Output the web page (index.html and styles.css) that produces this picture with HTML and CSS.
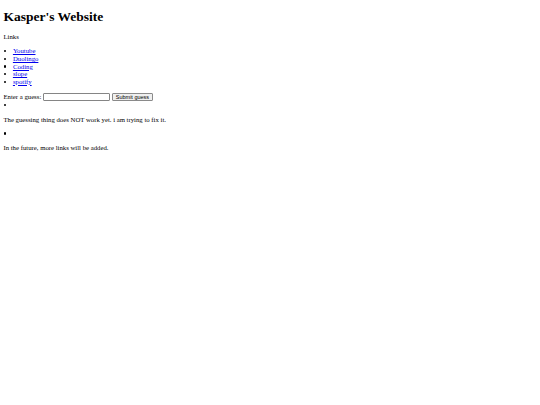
FILE: index.html
```html
<!DOCTYPE html>
<html lang="en">
<head>
    <meta charset="UTF-8">
    <meta name="viewport" content="width=device-width, initial-scale=1.0">
    <title>Kasper's Website</title>
    <link rel="stylesheet" href="styles.css">
</head>
<body>
    <h1>Kasper's Website</h1>

    <p>Links</p>
    <ul class="links">
        <li><a href="#">Youtube</a></li>
        <li><a href="#">Duolingo</a></li>
        <li><a href="#">Coding</a></li>
        <li><a href="#">slope</a></li>
        <li><a href="#">spotify</a></li>
    </ul>

    <form class="guess" onsubmit="return false;">
        <label for="guess">Enter a guess:</label>
        <input type="text" id="guess">
        <button type="submit">Submit guess</button>
    </form>

    <ul class="loose"><li></li></ul>
    <p>The guessing thing does NOT work yet. i am trying to fix it.</p>

    <ul class="loose"><li></li></ul>
    <p>In the future, more links will be added.</p>
</body>
</html>
```

FILE: styles.css
```css
body {
    margin: 3.4px;
    font-family: "Liberation Serif", "Times New Roman", serif;
    font-size: 6.75px;
    line-height: 7.6px;
    color: #000;
    background: #fff;
}

h1 {
    font-size: 13.5px;
    line-height: 15.5px;
    margin: 6px 0 8.5px;
}

p {
    margin: 6.5px 0;
}

a {
    color: #00e;
}

ul {
    margin: 6.5px 0;
    padding-left: 9.5px;
}

li {
    list-style: none;
    position: relative;
    min-height: 7.6px;
}

/* small round bullet, like the default disc */
li::before {
    content: "";
    position: absolute;
    left: -8.6px;
    top: 2.8px;
    width: 2.1px;
    height: 2.1px;
    border-radius: 50%;
    background: #000;
}

ul.loose {
    margin: 0;
}

.guess {
    display: flex;
    align-items: center;
    gap: 1.5px;
    height: 9.5px;
    margin: 0.5px 0 0;
}

.guess label {
    margin-right: 0.5px;
}

.guess input {
    width: 63px;
    height: 5px;
    padding: 0.5px 1px;
    border: 1px solid #858585;
    border-radius: 1px;
    font-size: 5.6px;
}

.guess button {
    font-family: "Liberation Sans", Arial, sans-serif;
    font-size: 5.5px;
    line-height: 6px;
    padding: 0.5px 3px;
    height: 8px;
    background: #efefef;
    border: 1px solid #8a8a8a;
    border-radius: 1px;
    color: #000;
}
```
